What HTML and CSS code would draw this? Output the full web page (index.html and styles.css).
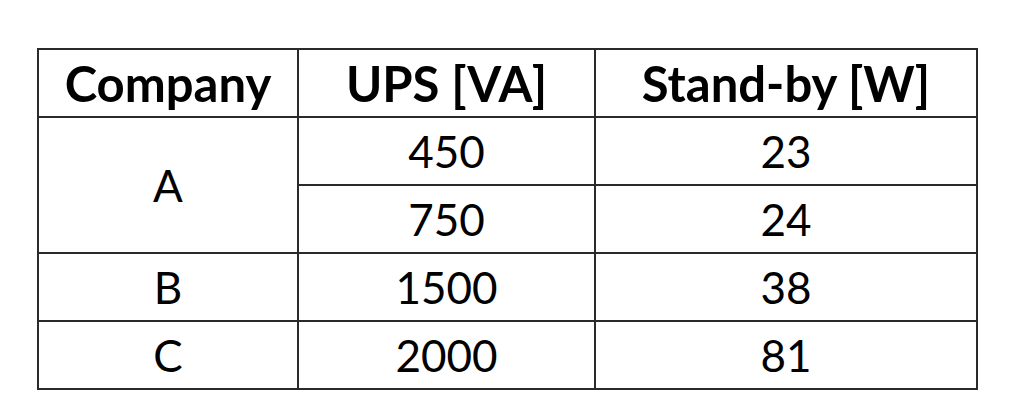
FILE: index.html
```html
<!DOCTYPE html>
<html>
<head>
<meta charset="utf-8">
<link rel="stylesheet" href="styles.css">
</head>
<body>
<div class="page">
<table class="ups">
  <colgroup>
    <col class="c1"><col class="c2"><col class="c3">
  </colgroup>
  <thead>
    <tr><th>Company</th><th>UPS [VA]</th><th>Stand-by [W]</th></tr>
  </thead>
  <tbody>
    <tr><td rowspan="2">A</td><td>450</td><td>23</td></tr>
    <tr><td>750</td><td>24</td></tr>
    <tr><td>B</td><td>1500</td><td>38</td></tr>
    <tr><td>C</td><td>2000</td><td>81</td></tr>
  </tbody>
</table>
</div>
</body>
</html>
```

FILE: styles.css
```css
html, body {
  margin: 0;
  padding: 0;
  background: #fff;
}
.page {
  padding: 48px 0 0 37px;
}
.ups {
  border-collapse: collapse;
  table-layout: fixed;
  width: 939px;
  font-family: Lato, "Liberation Sans", sans-serif;
  color: #000;
}
.c1 { width: 260px; }
.c2 { width: 297px; }
.c3 { width: 382px; }
.ups th, .ups td {
  border: 2px solid #2a2a2a;
  text-align: center;
  vertical-align: middle;
  padding: 0;
  height: 66px;
  line-height: 1;
}
.ups th {
  font-size: 49px;
  font-weight: 700;
}
.ups td {
  font-size: 44px;
  font-weight: 400;
}
```
